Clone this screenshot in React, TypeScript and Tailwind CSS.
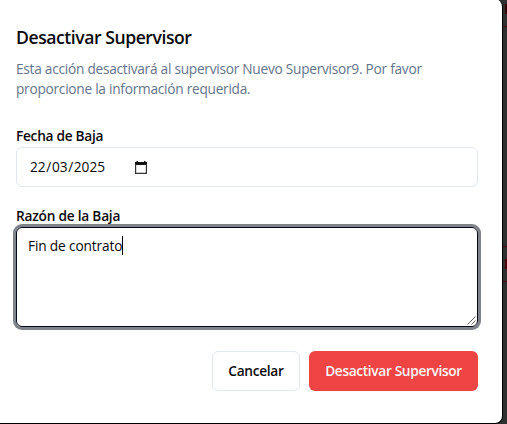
import React from "react";

function CalendarIcon() {
  return (
    <svg width="12" height="13" viewBox="0 0 12 13" className="ml-[29px] shrink-0">
      <path d="M1.5 0H3v1h6V0h1.5v1H12v3H0V1h1.5z" fill="#111" />
      <path d="M0.6 3v9.4h10.8V3" fill="none" stroke="#333" strokeWidth="1.2" />
    </svg>
  );
}

function Backdrop() {
  return (
    <div className="flex h-[424px] w-1 flex-col bg-[#2f3030]">
      <div className="mt-1 ml-0.5 h-[10px] bg-[#350208]" />
      <div className="mt-3 h-px bg-[#4a0810]" />
      <div className="mt-[219px] h-px bg-[#4a0810]" />
      <div className="mt-3 ml-0.5 h-[10px] bg-[#4a0008]" />
      <div className="mt-3 h-px bg-[#4a0810]" />
    </div>
  );
}

export default function App() {
  return (
    <div className="flex h-[424px] w-[507px] overflow-hidden bg-[#2f3030] font-['Open_Sans','Noto_Sans',sans-serif] text-[13.7px] leading-5 text-[#09090b]">
      <div className="-mt-px h-[425px] w-[503px] shrink-0 rounded-r-lg border-r border-b border-black bg-white pt-[25px] pr-6 pl-4">
        <h2 className="mt-1 h-[18px] text-[17.6px] leading-[18px] font-semibold tracking-[-0.45px] whitespace-nowrap">Desactivar Supervisor</h2>
        <p className="mt-[13px] h-10 tracking-[-0.26px] whitespace-nowrap text-[#64748b]">
          Esta acción desactivará al supervisor Nuevo Supervisor9. Por favor
          <br />
          proporcione la información requerida.
        </p>
        <div className="mt-[27px] h-5 font-semibold tracking-[-0.28px]">Fecha de Baja</div>
        <div className="mt-px flex h-10 items-center rounded-md border border-[#e2e8f0] px-[13px]">
          <span className="w-[76px] whitespace-nowrap">
            22<span className="mx-[0.6px]">/</span>03<span className="mx-[0.6px]">/</span>2025
          </span>
          <CalendarIcon />
        </div>
        <div className="mt-[19px] h-5 font-semibold tracking-[-0.23px]">Razón de la Baja</div>
        <div className="mt-px flex h-[100px] rounded-md border border-[#020817] pt-2 pr-3 pl-[11px] ring-[3px] ring-[#808389]">
          <span className="tracking-[-0.15px]">Fin de contrato</span>
          <span className="h-[19px] w-px bg-black" />
          <svg width="9" height="9" viewBox="0 0 9 9" className="mr-[-11px] mb-px ml-auto self-end" stroke="#555" fill="none" strokeWidth="0.9">
            <path d="M0.5 8.5L8.5 0.5M4.5 8.5L8.5 4.5" />
          </svg>
        </div>
        <div className="mt-6 flex justify-end gap-[9px] font-semibold whitespace-nowrap">
          <button className="h-10 w-[88px] rounded-md border border-[#e2e8f0] tracking-[-0.3px]">Cancelar</button>
          <button className="h-10 w-[169px] rounded-md bg-[#ef4444] tracking-[-0.34px] text-[#f8fafc]">Desactivar Supervisor</button>
        </div>
      </div>
      <Backdrop />
    </div>
  );
}
